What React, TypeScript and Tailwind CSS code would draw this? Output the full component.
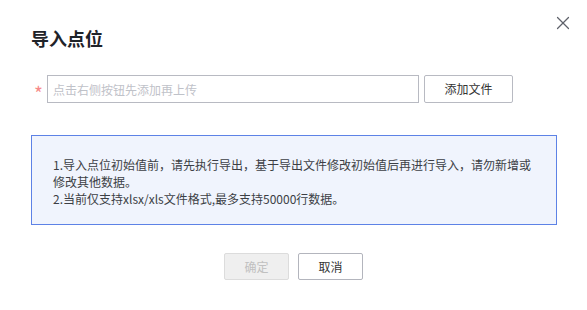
import { X } from "lucide-react";

export default function App() {
  return (
    <div
      className="relative w-[587px] h-[310px] bg-white px-[31px] pt-[26px]"
      style={{ fontFamily: '"Noto Sans CJK SC", "Liberation Sans", sans-serif' }}
    >
      <button className="absolute right-[13px] top-[12px] text-[#5f626b]">
        <X size={22} strokeWidth={1.3} />
      </button>

      <h2 className="text-[18px] leading-[24px] font-bold text-[#1f2329]">导入点位</h2>

      <div className="mt-[25px] flex items-center">
        <span className="w-[16px] pl-[3px] pt-[7px] text-[19px] leading-none text-[#f78a8a]">*</span>
        <input
          className="h-[28px] w-[372px] border border-[#b8bac2] px-[5px] text-[12px] text-[#333] placeholder:text-[#bfc2c9] outline-none"
          placeholder="点击右侧按钮先添加再上传"
        />
        <button className="ml-[5px] h-[28px] w-[89px] rounded-[2px] border border-[#b8bac2] bg-white text-[12px] text-[#333]">
          添加文件
        </button>
      </div>

      <div className="mt-[32px] w-[526px] h-[90px] border border-[#5d82e6] bg-[#f0f4fd] px-[21px] pt-[20px] text-[12px] leading-[17px] text-[#3c3f45]">
        1.导入点位初始值前，请先执行导出，基于导出文件修改初始值后再进行导入，请勿新增或
        <br />
        修改其他数据。
        <br />
        2.当前仅支持xlsx/xls文件格式,最多支持50000行数据。
      </div>

      <div className="mt-[28px] flex justify-center gap-[9px]">
        <button
          disabled
          className="h-[27px] w-[65px] rounded-[2px] border border-[#dcdcdc] bg-[#efefef] text-[12px] text-[#c0c0c0]"
        >
          确定
        </button>
        <button className="h-[27px] w-[65px] rounded-[2px] border border-[#b3b5bd] bg-white text-[12px] text-[#333]">
          取消
        </button>
      </div>
    </div>
  );
}
